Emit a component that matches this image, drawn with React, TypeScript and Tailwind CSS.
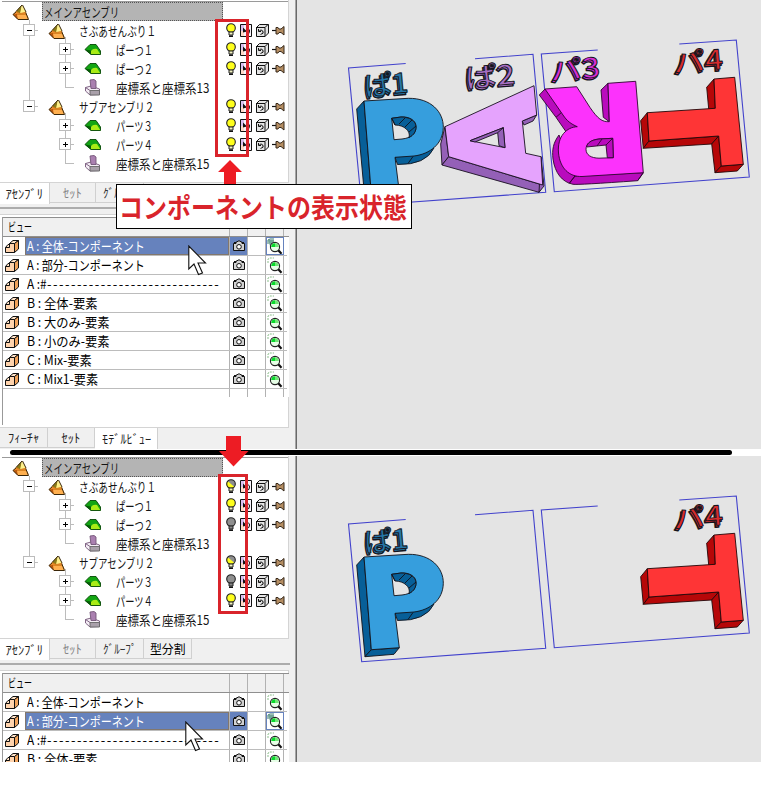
import { useLayoutEffect, useRef, useState, type ReactNode } from 'react';

/** A label condensed or widened to an exact width, like the UI bitmap font. */
function Fit({ w, className = '', children }: { w: number; className?: string; children: ReactNode }) {
  const ref = useRef<HTMLSpanElement>(null);
  const [scale, setScale] = useState(1);
  useLayoutEffect(() => {
    if (ref.current && ref.current.offsetWidth) setScale(w / ref.current.offsetWidth);
  }, [w]);
  return (
    <span className="block shrink-0" style={{ width: w }}>
      <span
        ref={ref}
        className={`block w-max origin-left whitespace-pre ${className}`}
        style={{ transform: `scaleX(${scale})` }}
      >
        {children}
      </span>
    </span>
  );
}

type Light = 'on' | 'off' | 'half';
type Kind = 'root' | 'sub' | 'part' | 'coord';
type Node = { kind: Kind; label: string; w: number; last?: boolean };

const NODES: Node[] = [
  { kind: 'root', label: 'メインアセンブリ', w: 75 },
  { kind: 'sub', label: 'さぶあせんぶり１', w: 77 },
  { kind: 'part', label: 'ぱーつ１', w: 37 },
  { kind: 'part', label: 'ぱーつ２', w: 37 },
  { kind: 'coord', label: '座標系と座標系13', w: 93 },
  { kind: 'sub', label: 'サブアセンブリ２', w: 75, last: true },
  { kind: 'part', label: 'パーツ３', w: 37, last: true },
  { kind: 'part', label: 'パーツ４', w: 37, last: true },
  { kind: 'coord', label: '座標系と座標系15', w: 93, last: true },
];

const VIEWS = [
  { label: 'A : 全体-コンポーネント', w: 118 },
  { label: 'A : 部分-コンポーネント', w: 118 },
  { label: 'A :#', w: 20, dashes: '-----------------------------' },
  { label: 'B : 全体-要素', w: 71 },
  { label: 'B : 大のみ-要素', w: 83 },
  { label: 'B : 小のみ-要素', w: 83 },
  { label: 'C : Mix-要素', w: 65 },
  { label: 'C : Mix1-要素', w: 71 },
];

function Pyramid({ x, y }: { x: number; y: number }) {
  return (
    <g transform={`translate(${x} ${y})`}>
      <path d="M0 9.5 3.5 6 12 6 15.5 13 5 14.5Z" fill="#e88a2c" />
      <path d="M0 9.5 4 9 5 14.5Z" fill="#b8560c" />
      <path d="M4 9 13.5 9 15.5 14 5 14.5Z" fill="#ffb050" />
      <path d="M9 0 3 6.5 7.5 8.5Z" fill="#8a7a18" />
      <path d="M9 0 13 7 7 8.5Z" fill="#fff08a" />
      <path d="M9 0 3 6.5M9.5 0 13 7M0 9.5 3.5 6.5M0 9.5 5 14.5 15.5 14.5 12.5 7" fill="none" stroke="#3a2608" strokeWidth="1" />
      <path d="M3 6.5 7 8.5 13 7.5M4 9.5 13 9.5" fill="none" stroke="#d07818" strokeWidth=".8" />
    </g>
  );
}

function Gutter({ kind, last }: Node) {
  const boxX = kind === 'sub' ? 29 : 65;
  return (
    <svg width="116" height="19" className="block shrink-0 overflow-visible">
      <g stroke="#bcbcbc" fill="none" shapeRendering="crispEdges">
        {kind === 'root' && <path d="M29.5 18V19" />}
        {kind === 'sub' && <path d={last ? 'M29.5 0V9.5H38' : 'M29.5 0V19M29 9.5H38'} />}
        {kind === 'sub' && <path d="M65.5 16V19" />}
        {kind === 'part' && <path d="M65.5 0V19M65 9.5H74" />}
        {kind === 'coord' && <path d="M65.5 0V9.5H74" />}
        {(kind === 'part' || kind === 'coord') && !last && <path d="M29.5 0V19" />}
        {(kind === 'sub' || kind === 'part') && (
          <>
            <rect x={boxX - 5.5} y="3.5" width="11" height="11" fill="#fff" />
            <path d={`M${boxX - 2} 9.5h5`} stroke="#000" />
            {kind === 'part' && <path d={`M${boxX + 0.5} 7v5`} stroke="#000" />}
          </>
        )}
      </g>
      {kind === 'root' && <Pyramid x={13} y={3} />}
      {kind === 'sub' && <Pyramid x={49} y={3} />}
      {kind === 'part' && (
        <g>
          <path d="M85 9.5 90 4.5 96 4.5 100.5 11 100.5 14.5 91 14.5Z" fill="#13a513" />
          <path d="M85 9.5 91 10.5 91 14.5Z" fill="#075f07" />
          <path d="M91 14V11Q93 8 97 9L100.5 14.5H91Z" fill="#a9ec16" />
          <path d="M85 9.5 90 4.5 96 4.5 100.5 11 100.5 14.5 91 14.5Z" fill="none" stroke="#064806" strokeWidth=".9" />
        </g>
      )}
      {kind === 'coord' && (
        <g strokeWidth=".9" stroke="#735577">
          <path d="M85.5 9.5 91 8 99.5 11 99.5 16.5 90 17 85.5 13Z" fill="#f4edf5" />
          <path d="M90 2 94 1.5 96 3 96 10.5 91 10.5Z" fill="#aa80b0" />
          <path d="M90 12.5H99.5V17H90Z" fill="#a9a0aa" stroke="#666" />
          <path d="M85.5 9.5 90 12.5" />
        </g>
      )}
    </svg>
  );
}

function Bulb({ state }: { state: Light }) {
  return (
    <svg width="10" height="15" viewBox="0 0 10 15">
      <circle cx="5" cy="5" r="4.3" fill={state === 'on' ? '#ffff1c' : '#8f8f8f'} />
      {state === 'half' && <path d="M1.5 2 8.5 8A4.3 4.3 0 0 1 1.5 2Z" fill="#ffff1c" />}
      <circle cx="5" cy="5" r="4.3" fill="none" stroke="#222" strokeWidth="1.1" />
      <path d="M3 9H7V12H3Z" fill={state === 'off' ? '#888' : '#f2f2c0'} stroke="#222" />
      <path d="M3 13.2H7" stroke="#111" strokeWidth="1.6" />
    </svg>
  );
}

function RowIcons({ light }: { light: Light }) {
  return (
    <div className="flex items-center">
      <Bulb state={light} />
      <svg width="49" height="15" className="ml-[3px]">
        <path d="M1.5 1.5H12.5V13.5H1.5Z" fill="#f7f3fb" />
        <path d="M2 2H5V13H2Z" fill="#d9bfef" />
        <path d="M2 8H5V13H2Z" fill="#ffd9c8" />
        <path d="M1.5 1.5H12.5V13.5H1.5Z" fill="none" stroke="#111" />
        <path d="M7 7.5Q10.5 4.5 10.5 8T8 11" fill="none" stroke="#111" />
        <path d="M4 4.5V9.5L8 8.5Z" fill="#111" />
        <path d="M17.5 4.5 20.5 1.5H29.5V10L26 13.5H17.5Z" fill="#e4e4e4" stroke="#111" />
        <path d="M17 4.5H26V13.5M26 4.5 29 1.5" fill="none" stroke="#111" />
        <path d="M19.5 6V8.5H22M20 8.5Q22 5.5 23.8 8T21.5 11.5" fill="none" stroke="#111" />
        <path d="M33 7.5H37" stroke="#111" strokeWidth="1.2" />
        <path d="M37 4.5H39L40 6H42L45 3.5V12L42 9.5H40L39 11H37Z" fill="#b48d62" stroke="#37291b" strokeWidth="1" />
      </svg>
    </div>
  );
}

function Tree({ lights }: { lights: Light[] }) {
  let lightIndex = 0;
  return (
    <div className="h-[183px] w-[289px] shrink-0 border-r border-b border-[#d4d4d4] bg-white pt-px">
      <div className="ml-[2px] h-px w-[286px] bg-[#9a9a9a]" />
      {NODES.map((n) => {
        const hasIcons = n.kind === 'sub' || n.kind === 'part';
        const labelled = (
          <Fit w={n.w} className="text-[13px] leading-[19px] text-[#141414]">
            {n.label}
          </Fit>
        );
        return (
          <div key={n.label} className="flex h-[19px] items-center">
            {n.kind === 'root' ? (
              <>
                <div className="w-[42px] shrink-0 overflow-hidden"><Gutter {...n} /></div>
                <div className="flex h-[19px] w-[181px] items-center border border-dotted border-[#555] bg-[#b4b4b4] pl-px">
                  {labelled}
                </div>
              </>
            ) : (
              <>
                <div className={n.kind === 'sub' ? 'w-[79px] shrink-0' : 'w-[116px] shrink-0'}><Gutter {...n} /></div>
                <div className={n.kind === 'sub' ? 'w-[147px] shrink-0' : 'w-[110px] shrink-0'}>{labelled}</div>
                {hasIcons && <RowIcons light={lights[lightIndex++]} />}
              </>
            )}
          </div>
        );
      })}
    </div>
  );
}

function ViewIcon() {
  return (
    <svg width="16" height="16">
      <g stroke="#111" strokeLinejoin="round" strokeWidth="1">
        <path d="M1.5 9.5 4 6.5H6.5V9.5Z" fill="#ffe2c6" />
        <path d="M5.5 5.5 9 2.5H14.5L10.5 5.5Z" fill="#ffe2c6" />
        <path d="M10.5 5.5 14.5 2.5V11L10.5 14.5Z" fill="#f0a25a" />
        <path d="M1.5 9.5H5.5V5.5H10.5V14.5H1.5Z" fill="#ffd3ac" />
      </g>
    </svg>
  );
}

function Camera() {
  return (
    <svg width="14" height="12">
      <path d="M1.5 3.5H4V2H5L6 1H8L9 2H10V3.5H12.5V10.5H1.5Z" fill="#d2d2d2" stroke="#111" />
      <circle cx="7" cy="6.8" r="2.3" fill="#fff" stroke="#111" />
      <path d="M2 2.5H4M10 2.5H12" stroke="#111" />
    </svg>
  );
}

function Magnifier({ active }: { active: boolean }) {
  return (
    <svg width="16" height="17">
      <path d="M1 6V2L3 1H7" fill="none" stroke={active ? '#3c7c70' : '#8bbf8b'} strokeDasharray={active ? undefined : '2 1'} />
      {active && <path d="M1 2H7V8H3Z" fill="#73a596" />}
      <circle cx="8" cy="9" r="4.6" fill="#e7ffe7" stroke="#222" strokeWidth="1.1" />
      <path d="M8 9H4.2A3.8 3.8 0 0 1 8 5.2Z" fill="#08d92c" />
      <path d="M8 9V5.2A3.8 3.8 0 0 1 11.8 9Z" fill="#71e676" />
      <path d="M11.3 12.3 14.5 15.8" stroke="#111" strokeWidth="2.2" />
    </svg>
  );
}

function ViewTable({ selected, rows }: { selected: number; rows: number }) {
  const cell = 'border-r border-[#b2b2b2]';
  return (
    <div className="h-[208px] w-[287px] border-l border-[#999]">
      <div className="grid h-[20px] grid-cols-[227px_18px_18px_18px] border-t border-b border-[#8f8f8f] bg-[#f0f0f0]">
        <div className={`${cell} pl-[5px]`}>
          <Fit w={24} className="text-[12px] leading-[18px] text-black">ビュー</Fit>
        </div>
        <div className={cell} /><div className={cell} /><div className={cell} />
      </div>
      <div className="bg-white">
        {VIEWS.slice(0, rows).map((v, i) => {
          const on = i === selected;
          return (
            <div key={v.label} className="h-[19px] w-[284px] border-b border-[#bcbcbc]">
              <div className="grid h-[18px] grid-cols-[227px_18px_18px_18px]">
                <div className={`${cell} flex items-center pl-px`}>
                  <ViewIcon />
                  <div className={`ml-[5px] flex h-[18px] flex-1 items-center pl-[2px] ${on ? 'bg-[#6682bd] text-white outline outline-1 -outline-offset-1 outline-[#82776d]' : 'text-black'}`}>
                    <Fit w={v.w} className="text-[13px] leading-[18px]">{v.label}</Fit>
                    {v.dashes && <Fit w={173} className="text-[13px] leading-[18px] tracking-[1.5px]">{v.dashes}</Fit>}
                  </div>
                </div>
                <div className={`${cell} flex items-center justify-center ${on ? 'bg-[#6682bd]' : ''}`}><Camera /></div>
                <div className={cell} />
                <div className={`${cell} flex items-center justify-center ${on ? 'outline outline-1 -outline-offset-1 outline-[#6682bd]' : ''}`}>
                  <Magnifier active={on} />
                </div>
              </div>
            </div>
          );
        })}
        <div className="grid h-[8px] grid-cols-[227px_18px_18px_18px]">
          <div className={cell} /><div className={cell} /><div className={cell} /><div className={cell} />
        </div>
      </div>
    </div>
  );
}

function Tab({ label, w, className }: { label: string; w: number; className: string }) {
  return (
    <div className={`flex shrink-0 items-center justify-center border-r border-[#d0d0d0] ${className}`}>
      <Fit w={w} className="text-[12.5px] leading-[20px]">{label}</Fit>
    </div>
  );
}

function PartLabel({ x, y, text, fill, w }: { x: number; y: number; text: string; fill: string; w: number }) {
  return (
    <g transform={`translate(${x} ${y}) rotate(-5)`} fontSize="27" fontWeight="500" strokeLinejoin="round">
      <text x="-1.5" y="2" textLength={w} lengthAdjust="spacingAndGlyphs" fill={fill} stroke="#15151d" strokeWidth="1.3" aria-hidden="true">{text}</text>
      <text textLength={w} lengthAdjust="spacingAndGlyphs" fill={fill} stroke="#15151d" strokeWidth=".9">{text}</text>
    </g>
  );
}

function Viewport({ full, height }: { full: boolean; height: number }) {
  return (
    <svg width="464" height={height} viewBox={`297 0 464 ${height}`} className="block bg-[#e4e4e4]">
      <g fill="none" stroke="#4242cc" strokeWidth="1.1">
        <path d="M405.7 63.5 348.5 68 361.7 205.7 545.7 192.3 533 54.3 475 58.7" />
        <path d="M597.7 50 541.3 54 554.3 191.7 749.3 177 736.3 40 679.3 44" />
      </g>
      <g stroke="#111118" strokeWidth=".9" strokeLinejoin="round">
        <g fill="#075f98">
          <path d="M364 101 356.7 109 365 200.7 371.3 193.7Z" />
          <path d="M365 200.7 394 198.3 399.3 191.7 371.3 193.7Z" />
          <path d="M395 157.3 397.5 164.5Q426 165 434 148L431.7 145Z" />
        </g>
        <path fillRule="evenodd" fill="#369edd" d="M364 101 408.3 98.3C431 98 443.5 112 443.3 127.3C443 144 430 154 414 156L395 157.3 399.3 191.7 371.3 193.7ZM391.7 118.3 394 139.7 402 139C411 138 416 134 416 127C416 120 409 116.5 401 117Z" />
        <path fill="#075f98" d="M391.7 118.3 401 117C410 117 416 121 416 127C416 131 414 135 409 137.5C411 131 404 125 395 125Z" />
        <path fill="none" d="M391.7 118.3 395 125M399 124 405 118M405 127 412 120M409 132 416 126M408 163.5 413 156.5" />
      </g>
      {full && (
        <>
          <g stroke="#181020" strokeWidth=".9" strokeLinejoin="round">
            <g fill="#9460b7">
              <path d="M445 126.7 440.7 144 442 165 448.7 156.7Z" />
              <path d="M442 165 539 192.3 542.7 185 448.7 156.7Z" />
              <path d="M539 192.3 544 186 541 156.7Z" />
              <path d="M522.3 121 524 125 533 121 536.7 115Z" />
            </g>
            <path fill="#e5a3fd" fillRule="evenodd" d="M445 126.7 534 85.7 536.7 115 522.3 121 525.7 153.3 541 156.7 542.7 185 448.7 156.7ZM470 140.7 503.3 127.7 505 147.7Z" />
            <path fill="#9460b7" d="M470 140.7 503.3 127.7 505 147.7 499 145.7 497.7 132.7 475 142Z" />
            <path fill="none" d="M497.7 132.7 503.3 127.7" />
          </g>
          <g stroke="#2c062f" strokeWidth=".9" strokeLinejoin="round">
            <g fill="#b90bbd">
              <path d="M545 89 539.3 95 556 117.3 566 131.7 577.3 126.7Z" />
              <path d="M559 135C553 143 552 150 553 159C555 173 562 182 573 184.3Q578 185 637.7 180.7L643.3 172.7 575 176Z" />
              <path d="M608 83.3 601 90 603.3 117.3 609.3 121.7Z" />
              <path d="M556 117.3 562 112M575 176 569.3 183.3M637.7 180.7 643.3 172.7" fill="none" />
            </g>
            <path fill="#fc32fc" fillRule="evenodd" d="M545 89 576.7 86.7 590 107.5C598 119 602 122 609.3 121.7L608 83.3 635.7 81.3 643.3 172.7 582 176.5C569 177 560 168 558.5 153C557 136 567 127 577.3 126.7C571 124 567 121 563 115ZM612.7 138.3 599 139C590 140 586 144 586 149.3C586 155 591 158 599 158.2L613.3 157.7Z" />
            <path fill="#b90bbd" d="M612.7 138.3 599 139C591 140 587 143 586.7 147L606 145 607.3 157.7 613.3 157.7Z" />
            <path fill="none" d="M606 145 612.7 138.3M597 146 602 139M569.3 183.3 575 176" />
          </g>
        </>
      )}
      <g stroke="#220608" strokeWidth=".9" strokeLinejoin="round">
        <g fill="#b60708">
          <path d="M647.3 112.7 640.7 120.7 643.3 148.3 649 141Z" />
          <path d="M643.3 148.3 711.7 144 718.7 136 649 141Z" />
          <path d="M718.7 136 711.7 144 715 172.7 721.3 166Z" />
          <path d="M715 172.7 737.3 171 743.3 164.3 721.3 166Z" />
          <path d="M714 79 706.7 87.3 708.7 109 715.3 108.3Z" />
        </g>
        <path fill="#fe3536" d="M647.3 112.7 715.3 108.3 714 79 734.7 77.3 743.3 164.3 721.3 166 718.7 136 649 141Z" />
      </g>
      <PartLabel x={365} y={96} text="ぱ1" fill="#2677a8" w={44} />
      {full && <PartLabel x={466} y={88} text="ぱ2" fill="#a66fc3" w={50} />}
      {full && <PartLabel x={551} y={81} text="パ3" fill="#d42fd5" w={50} />}
      <PartLabel x={674} y={73} text="パ4" fill="#d72c2d" w={50} />
    </svg>
  );
}

type ScreenProps = {
  lights: Light[];
  selected: number;
  full: boolean;
  height: number;
  rows: number;
  className: string;
};

function Screen({ lights, selected, full, height, rows, className }: ScreenProps) {
  return (
    <section className={`flex w-[761px] overflow-hidden bg-[#f0f0f0] ${className}`}>
      <div className="flex w-[295px] shrink-0 flex-col">
        <Tree lights={lights} />
        <div className="flex h-[24px] shrink-0 items-start">
          <Tab label="ｱｾﾝﾌﾞﾘ" w={38} className="h-[21px] w-[50px] bg-white text-[#222]" />
          <Tab label="ｾｯﾄ" w={19} className="h-[20px] w-[46px] border-b text-[#858585]" />
          <Tab label="ｸﾞﾙｰﾌﾟ" w={34} className="h-[20px] w-[48px] border-b text-[#333]" />
          {!full && <Tab label="型分割" w={36} className="h-[20px] w-[48px] border-b text-black" />}
        </div>
        <div className="h-[2px] w-[290px] shrink-0 bg-[#acacac]" />
        <div className="mt-[5px] h-[214px] w-[289px] shrink-0 border border-l-0 border-[#d4d4d4] bg-white pt-[2px] pl-[2px]">
          <ViewTable selected={selected} rows={rows} />
        </div>
        {full && (
          <div className="flex h-[21px] shrink-0">
            <Tab label="ﾌｨｰﾁｬ" w={31} className="h-[20px] w-[48px] border-b text-[#222]" />
            <Tab label="ｾｯﾄ" w={19} className="h-[20px] w-[47px] border-b text-[#222]" />
            <Tab label="ﾓﾃﾞﾙﾋﾞｭｰ" w={49} className="h-[21px] w-[63px] bg-white text-[#222]" />
          </div>
        )}
      </div>
      <div className="w-[2px] shrink-0 border-l border-[#a5a5a5] bg-[#696969]" />
      <Viewport full={full} height={height} />
    </section>
  );
}

function Cursor({ className }: { className: string }) {
  return (
    <svg width="20" height="32" className={`absolute ${className}`}>
      <path d="M.8 1V24L6 19 10.5 29.5 14.5 28 10 18H17.5Z" fill="#fff" stroke="#111" strokeWidth="1.1" />
    </svg>
  );
}

export default function App() {
  return (
    <main className="relative h-[788px] w-[761px] overflow-hidden bg-white font-['Noto_Sans_CJK_JP',sans-serif]">
      <Screen className="h-[449px]" height={449} full selected={0} rows={8} lights={['on', 'on', 'on', 'on', 'on', 'on']} />
      <div className="flex h-[7px] items-center pl-[10px]">
        <div className="h-[5px] w-[722px] rounded-full bg-black" />
      </div>
      <Screen className="h-[306px]" height={306} full={false} selected={1} rows={4} lights={['half', 'on', 'off', 'half', 'off', 'on']} />

      <div className="absolute top-[19px] left-[215px] h-[138px] w-[34px] border-3 border-[#d9242b]" />
      <div className="absolute top-[474px] left-[218px] h-[140px] w-[30px] border-3 border-[#d9242b]" />
      <svg width="26" height="26" className="absolute top-[160px] left-[217px]">
        <path d="M13 0 25 12H19V26H7V12H1Z" fill="#ed1c24" />
      </svg>
      <svg width="30" height="31" className="absolute top-[436px] left-[219px]">
        <path d="M7 0H22V15H29.5L14.5 30.5 0 15H7Z" fill="#ed1c24" />
      </svg>
      <div className="absolute top-[184px] left-[116px] flex h-[45px] w-[296px] items-center border border-black bg-white pl-[2px]">
        <Fit w={288} className="text-[27px] leading-[43px] font-bold text-[#d9242b]">コンポーネントの表示状態</Fit>
      </div>
      <Cursor className="top-[245px] left-[188px]" />
      <Cursor className="top-[721px] left-[185px]" />
    </main>
  );
}
